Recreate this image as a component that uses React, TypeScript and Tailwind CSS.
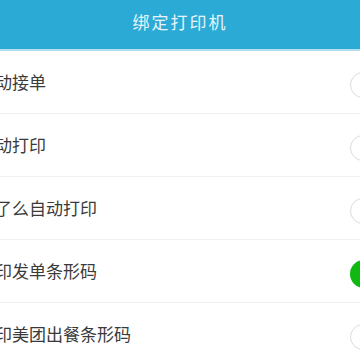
import React from "react";

const rows: { label: string; on: boolean }[] = [
  { label: "自动接单", on: false },
  { label: "自动打印", on: false },
  { label: "饿了么自动打印", on: false },
  { label: "打印发单条形码", on: true },
  { label: "打印美团出餐条形码", on: false },
];

function Toggle({ on }: { on: boolean }) {
  return on ? (
    <div className="w-[52px] h-[28px] rounded-full bg-[#12b812] shrink-0 mt-[5px]" />
  ) : (
    <div className="w-[52px] h-[26px] rounded-full border border-[#dcdcdc] bg-white shrink-0 mt-[5px]" />
  );
}

export default function App() {
  return (
    <div
      className="w-[360px] h-[360px] overflow-hidden bg-white"
      style={{ fontFamily: '"Noto Sans CJK SC", "Noto Sans", sans-serif' }}
    >
      <div className="h-[49px] bg-[#2aaad5] flex justify-center pt-[10px]">
        <span className="text-[17px] tracking-[2px] text-[#e6f4fa] leading-[24px]">绑定打印机</span>
      </div>
      <div className="h-[2px] bg-[#b2def0]" />
      <div className="flex flex-col">
        {rows.map((r) => (
          <div
            key={r.label}
            className="h-[63px] border-b border-[#f0f0f0] flex items-center justify-between overflow-hidden"
          >
            <span className="ml-[-22px] text-[17px] text-[#3a3a3a] whitespace-nowrap leading-[24px]">
              {r.label}
            </span>
            <div className="mr-[-42px]">
              <Toggle on={r.on} />
            </div>
          </div>
        ))}
      </div>
    </div>
  );
}
